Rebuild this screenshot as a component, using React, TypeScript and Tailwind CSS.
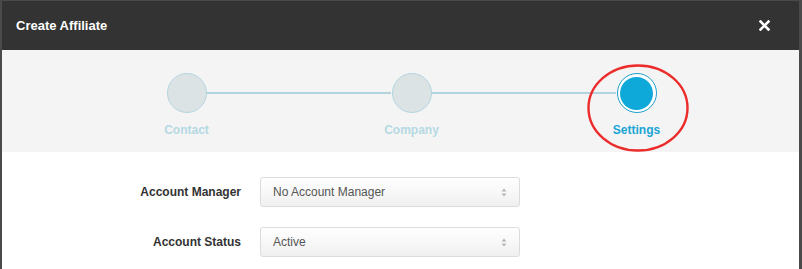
import React from 'react';

const steps = [
  { label: 'Contact', active: false },
  { label: 'Company', active: false },
  { label: 'Settings', active: true },
];

const fields = [
  { label: 'Account Manager', value: 'No Account Manager' },
  { label: 'Account Status', value: 'Active' },
];

const SortArrows: React.FC = () => (
  <svg width="6" height="9" viewBox="0 0 6 9" className="shrink-0">
    <path d="M3 0.5 L5.5 3.5 H0.5 Z" fill="#b5b5b5" />
    <path d="M3 8.5 L5.5 5.5 H0.5 Z" fill="#b5b5b5" />
  </svg>
);

const App: React.FC = () => {
  return (
    <div
      className="w-[802px] h-[269px] overflow-hidden bg-[#4a4a4a] pl-[2px] pr-[3px] pt-[1px]"
      style={{ fontFamily: '"Liberation Sans", Arial, sans-serif' }}
    >
      <div className="relative h-full bg-white">
        {/* header */}
        <div className="h-[49px] bg-[#333333] flex items-center justify-between pl-[14px] pr-[29px]">
          <h1 className="text-[13px] font-bold text-white">Create Affiliate</h1>
          <svg width="11" height="11" viewBox="0 0 11 11">
            <path d="M1.5 1.5 L9.5 9.5 M9.5 1.5 L1.5 9.5" stroke="#fff" strokeWidth="2.6" strokeLinecap="square" />
          </svg>
        </div>

        {/* stepper */}
        <div className="h-[102px] bg-[#f4f4f4] pt-[23px] pl-[72px]">
          <div className="flex">
            {steps.map((step, i) => (
              <div key={step.label} className="relative w-[225px] flex flex-col items-center">
                {i < steps.length - 1 && (
                  <div className="absolute top-[19px] left-[132px] w-[185px] h-[2px] bg-[#b0d3dc]" />
                )}
                {step.active ? (
                  <div className="relative w-[40px] h-[40px] rounded-full border border-[#1b9fcb] bg-white flex items-center justify-center">
                    <div className="w-[33px] h-[33px] rounded-full bg-[#0ea9d9]" />
                  </div>
                ) : (
                  <div className="relative w-[40px] h-[40px] rounded-full border border-[#b3d6df] bg-[#dbe3e5]" />
                )}
                <span
                  className={
                    'mt-[8px] text-[12px] font-bold ' +
                    (step.active ? 'text-[#1aa5d5]' : 'text-[#b5d9e3]')
                  }
                >
                  {step.label}
                </span>
              </div>
            ))}
          </div>
        </div>

        {/* form */}
        <div className="pt-[25px] flex flex-col gap-[20px]">
          {fields.map((f) => (
            <div key={f.label} className="flex items-center">
              <label className="w-[239px] text-right text-[12px] font-bold text-[#333]">
                {f.label}
              </label>
              <div className="ml-[19px] w-[260px] h-[30px] rounded-[3px] border border-[#dcdcdc] bg-gradient-to-b from-white to-[#f0f0f0] flex items-center justify-between pl-[12px] pr-[12px]">
                <span className="text-[12px] text-[#555]">{f.value}</span>
                <SortArrows />
              </div>
            </div>
          ))}
        </div>

        {/* red annotation ring */}
        <svg
          className="absolute left-[584px] top-[62px] pointer-events-none"
          width="104"
          height="90"
          viewBox="0 0 104 90"
        >
          <ellipse cx="52" cy="45" rx="49.5" ry="42.5" fill="none" stroke="#ec2b2b" strokeWidth="2.4" />
        </svg>
      </div>
    </div>
  );
};

export default App;
